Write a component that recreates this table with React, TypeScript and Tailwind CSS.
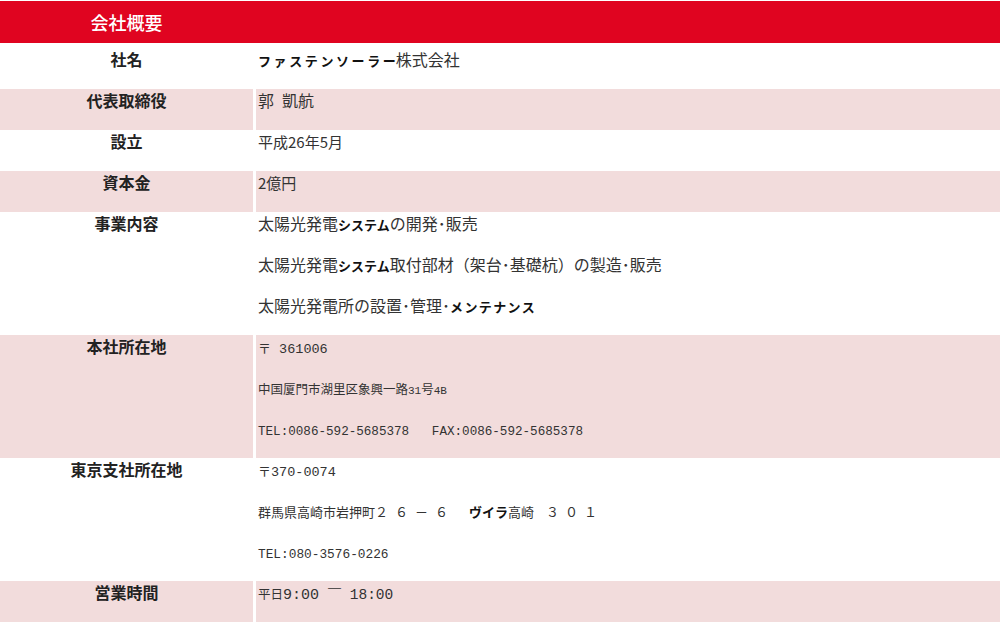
import React from "react";

const JP = "font-['Noto_Sans_CJK_JP',sans-serif]";
const MONO = "font-['Liberation_Mono','Noto_Sans_CJK_JP',monospace]";

function K({ children, cls = "" }: { children: React.ReactNode; cls?: string }) {
  return <span className={`font-bold text-[13px] text-[#111] ${cls}`}>{children}</span>;
}

function Row({
  label,
  pink,
  first,
  lines,
}: {
  label: string;
  pink?: boolean;
  first?: boolean;
  lines: React.ReactNode[];
}) {
  const bg = pink ? "bg-[#f2dcdc]" : "bg-white";
  return (
    <div className={`flex ${first ? "pt-[5px] h-[46px]" : ""}`}>
      <div className={`w-[253px] shrink-0 ${bg} text-center text-[16px] font-bold text-[#222] leading-[22px]`}>
        {label}
      </div>
      <div className="w-[3px] shrink-0 bg-white" />
      <div className={`flex-1 ${bg} pl-[2px] text-[16px] text-[#333]`}>
        {lines.map((l, i) => (
          <div key={i} className={`${first ? "" : "h-[41px]"} leading-[22px] whitespace-nowrap`}>
            {l}
          </div>
        ))}
      </div>
    </div>
  );
}

export default function App() {
  return (
    <div className={`w-[1000px] bg-white ${JP}`}>
      <div className="mt-px h-[42px] bg-[#e00420] flex items-center">
        <div className="w-[253px] text-center text-white text-[18px] font-medium">会社概要</div>
      </div>
      <Row
        first
        label="社名"
        lines={[
          <>
            <K cls="tracking-[2.6px]">ファステンソーラ</K>
            <K>ー</K>株式会社
          </>,
        ]}
      />
      <Row
        pink
        label="代表取締役"
        lines={[
          <>
            郭<span className="inline-block w-[8px]" />凱航
          </>,
        ]}
      />
      <Row label="設立" lines={[<span className="text-[15px]">平成26年5月</span>]} />
      <Row pink label="資本金" lines={[<span className="text-[15px]">2億円</span>]} />
      <Row
        label="事業内容"
        lines={[
          <>
            太陽光発電<K>システム</K>の開発･販売
          </>,
          <>
            太陽光発電<K>システム</K>取付部材（架台･基礎杭）の製造･販売
          </>,
          <>
            太陽光発電所の設置･管理･<K cls="tracking-[1.4px]">メンテナンス</K>
          </>,
        ]}
      />
      <Row
        pink
        label="本社所在地"
        lines={[
          <span className="text-[13px]">
            〒<span className={`${MONO} text-[13.5px]`}> 361006</span>
          </span>,
          <span className="text-[12.5px]">
            中国厦門市湖里区象興一路<span className={`${MONO} text-[11px]`}>31</span>号
            <span className={`${MONO} text-[11px]`}>4B</span>
          </span>,
          <span className={`${MONO} text-[12.6px]`}>TEL:0086-592-5685378{"\u00a0\u00a0\u00a0"}FAX:0086-592-5685378</span>,
        ]}
      />
      <Row
        label="東京支社所在地"
        lines={[
          <span className="text-[13px]">
            〒<span className={`${MONO} text-[13.5px]`}>370-0074</span>
          </span>,
          <span className="text-[13px]">
            群馬県高崎市岩押町<span className="tracking-[7px]">２６－６</span>
            <span className="inline-block w-[14px]" />
            <K cls="text-[11px]">ヴイラ</K>高崎<span className="ml-[12px] tracking-[6px]">３０１</span>
          </span>,
          <span className={`${MONO} text-[12.8px]`}>TEL:080-3576-0226</span>,
        ]}
      />
      <Row
        pink
        label="営業時間"
        lines={[
          <span className="text-[12.5px]">
            平日<span className={`${MONO} text-[15px]`}>9:00 </span>
            <span className="text-[13px] font-bold">￣</span>
            <span className={`${MONO} text-[14.5px]`}> 18:00</span>
          </span>,
        ]}
      />
    </div>
  );
}
